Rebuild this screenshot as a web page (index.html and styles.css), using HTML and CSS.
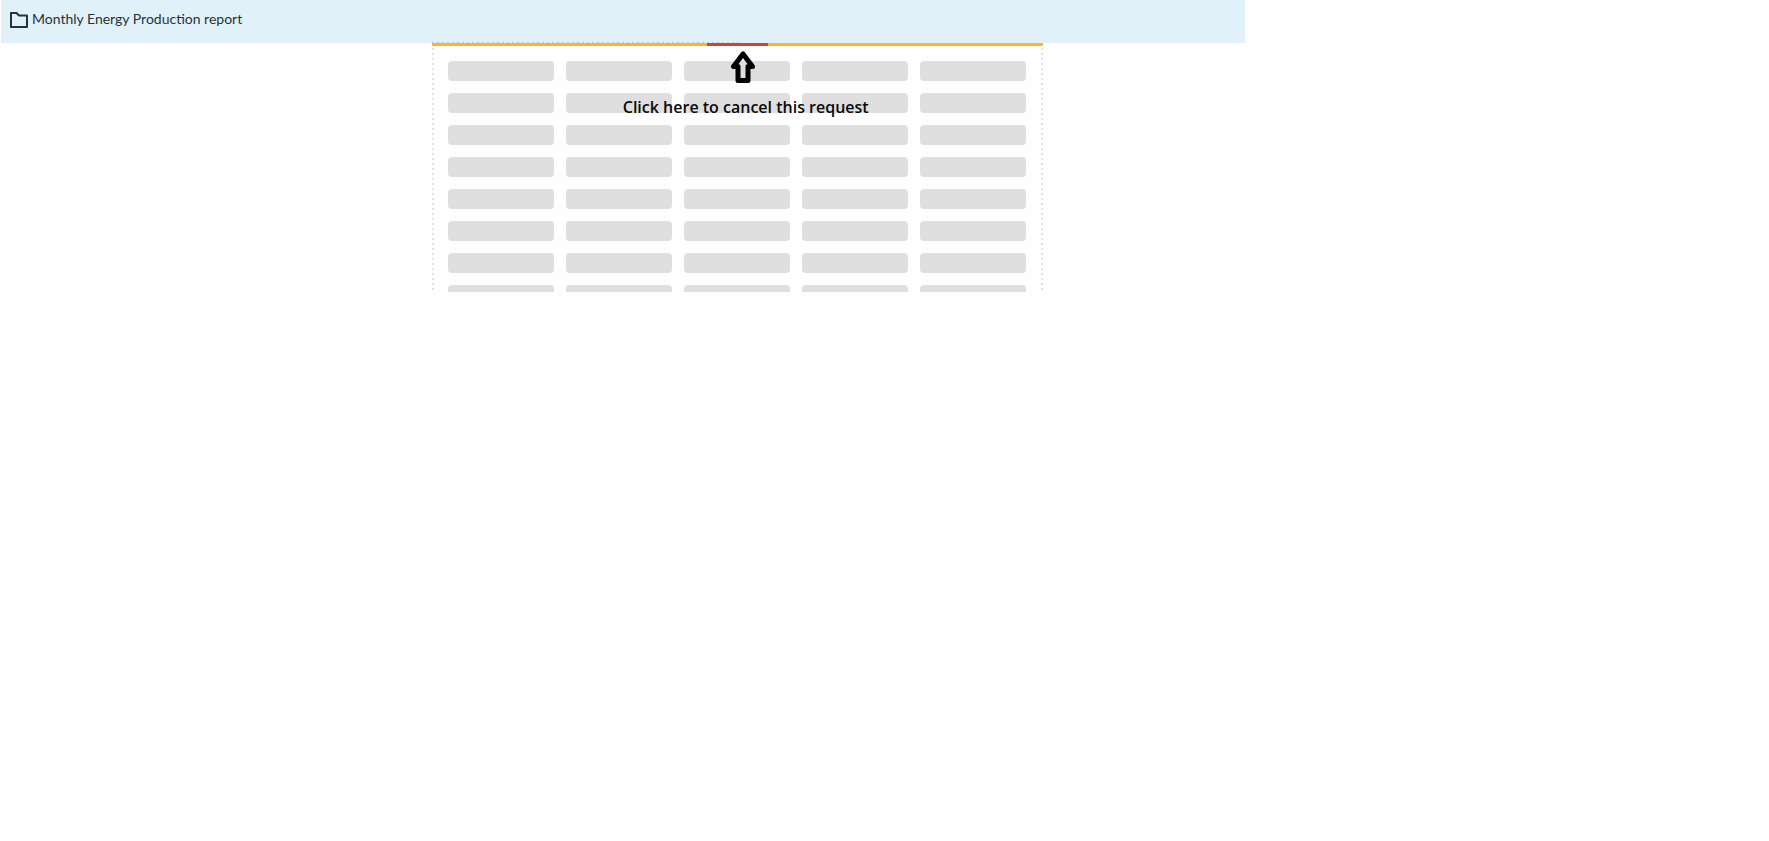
FILE: index.html
```html
<!DOCTYPE html>
<html lang="en">
<head>
<meta charset="utf-8">
<title>Monthly Energy Production report</title>
<link rel="stylesheet" href="styles.css">
</head>
<body>
<main class="report">
  <header class="report-header">
    <svg class="folder" viewBox="0 0 20 18" aria-hidden="true"><path d="M2 2h5.500l2.500 2.500H18v11.500H2z"/></svg>
    <h1 class="title">Monthly Energy Production report</h1>
  </header>
  <div class="stage">
    <section class="panel" aria-label="Loading report" aria-busy="true">
      <div class="progress"><button class="cancel" type="button" aria-label="Cancel request"></button></div>
      <div class="skeleton">
        <span></span><span></span><span></span><span></span><span></span>
        <span></span><span></span><span></span><span></span><span></span>
        <span></span><span></span><span></span><span></span><span></span>
        <span></span><span></span><span></span><span></span><span></span>
        <span></span><span></span><span></span><span></span><span></span>
        <span></span><span></span><span></span><span></span><span></span>
        <span></span><span></span><span></span><span></span><span></span>
        <span class="cut"></span><span class="cut"></span><span class="cut"></span><span class="cut"></span><span class="cut"></span>
      </div>
      <div class="callout">
        <svg class="arrow" viewBox="0 0 26 34" aria-hidden="true"><path d="M13 4 3.500 16.500H8V30.500H18V16.500H22.500z"/></svg>
        <p class="hint">Click here to cancel this request</p>
      </div>
    </section>
  </div>
</main>
</body>
</html>
```
FILE: styles.css
```css
* { box-sizing: border-box; }

body {
  margin: 0;
  background: #fefefe;
  font-family: "Lato", "Liberation Sans", sans-serif;
}

.report {
  width: 70.4%;
}

.report-header {
  display: flex;
  align-items: center;
  gap: 3px;
  height: 43px;
  margin-left: 1px;
  padding: 0 8px 5px;
  background: #e0f1fa;
}

.folder {
  width: 20px;
  height: 18px;
  margin-top: 2px;
  fill: none;
  stroke: #263238;
  stroke-width: 2;
  stroke-linejoin: round;
}

.title {
  margin: 0;
  color: #263238;
  font-size: 14px;
  font-weight: 400;
  line-height: 20px;
}

.stage {
  display: grid;
  grid-template-columns: 432fr 611fr 202fr;
}

.panel {
  position: relative;
  grid-column: 2;
  background:
    repeating-linear-gradient(#e2e2e2 0 2px, transparent 2px 5px) left / 2px 100% no-repeat,
    repeating-linear-gradient(#e2e2e2 0 2px, transparent 2px 5px) right / 2px 100% no-repeat;
}

/* dotted edge above the first half of the progress bar */
.panel::before {
  content: "";
  position: absolute;
  top: -1px;
  left: 0;
  width: 50%;
  height: 1px;
  background: repeating-linear-gradient(90deg, #bfc8cd 0 2px, transparent 2px 5px);
}

.progress {
  display: flex;
  justify-content: center;
  height: 3px;
  background: #ffb420;
}

.cancel {
  width: 10%;
  height: 3px;
  padding: 0;
  border: 0;
  background: #dc3c32;
  cursor: pointer;
}

.skeleton {
  display: grid;
  grid-template-columns: repeat(5, 1fr);
  gap: 12px;
  padding: 15px 17px 0 16px;
}

.skeleton span {
  height: 20px;
  border-radius: 4px;
  background: #dfdfdf;
}

.skeleton .cut {
  height: 7px;
  border-radius: 4px 4px 0 0;
}

.callout {
  position: absolute;
  top: 7px;
  left: 10px;
  right: 0;
  display: flex;
  flex-direction: column;
  align-items: center;
  gap: 11px;
  pointer-events: none;
}

.arrow {
  width: 26px;
  height: 34px;
  fill: none;
  stroke: #000;
  stroke-width: 5;
  stroke-linejoin: round;
}

.hint {
  margin: 0;
  padding-left: 6px;
  color: #0a0a0a;
  font-family: "Open Sans", "Lato", sans-serif;
  font-size: 16px;
  font-weight: 600;
  line-height: 24px;
}
```
